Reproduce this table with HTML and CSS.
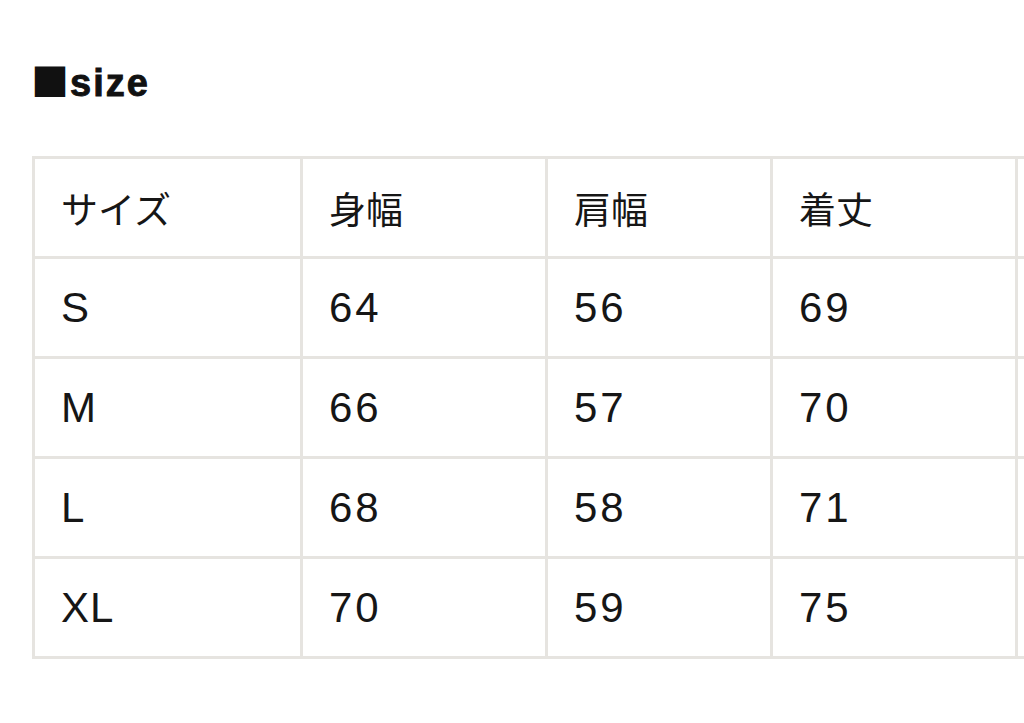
FILE: index.html
```html
<!DOCTYPE html>
<html lang="ja">
<head>
<meta charset="utf-8">
<title>size</title>
<link rel="stylesheet" href="styles.css">
</head>
<body>
<main class="page">
  <h2 class="title"><span class="mark">■</span><span class="word">size</span></h2>
  <div class="size-table">
    <div class="cell head">サイズ</div>
    <div class="cell head">身幅</div>
    <div class="cell head">肩幅</div>
    <div class="cell head">着丈</div>
    <div class="cell head"></div>

    <div class="cell">S</div>
    <div class="cell">64</div>
    <div class="cell">56</div>
    <div class="cell">69</div>
    <div class="cell"></div>

    <div class="cell">M</div>
    <div class="cell">66</div>
    <div class="cell">57</div>
    <div class="cell">70</div>
    <div class="cell"></div>

    <div class="cell">L</div>
    <div class="cell">68</div>
    <div class="cell">58</div>
    <div class="cell">71</div>
    <div class="cell"></div>

    <div class="cell xl">XL</div>
    <div class="cell">70</div>
    <div class="cell">59</div>
    <div class="cell">75</div>
    <div class="cell"></div>
  </div>
</main>
</body>
</html>
```

FILE: styles.css
```css
html, body {
  margin: 0;
  padding: 0;
  background: #ffffff;
  overflow: hidden;
}

body {
  width: 1024px;
  height: 723px;
  font-family: "Liberation Sans", "Noto Sans CJK JP", sans-serif;
  color: #161616;
}

.page {
  padding-left: 32px;
  padding-top: 58px;
}

.title {
  margin: 0 0 54px 0;
  height: 44px;
  font-size: 38px;
  line-height: 44px;
  font-weight: 700;
  color: #111;
  display: flex;
  align-items: baseline;
}

.mark {
  font-family: "Noto Sans CJK JP", sans-serif;
  font-size: 38px;
  margin-left: -1px;
  margin-right: 1px;
}

.word {
  letter-spacing: 2px;
  -webkit-text-stroke: 0.9px #111;
}

.size-table {
  display: grid;
  grid-template-columns: 265px 242px 222px 242px 242px;
  grid-auto-rows: 97px;
  gap: 3px;
  padding: 3px;
  background: #e6e4e0;
  width: max-content;
}

.cell {
  background: #ffffff;
  display: flex;
  align-items: center;
  padding-left: 26px;
  font-size: 42px;
  letter-spacing: 3px;
  color: #161616;
}

.cell.xl {
  letter-spacing: 1px;
}

.cell.head {
  font-size: 37px;
  letter-spacing: 0;
  padding-left: 26px;
}
```
